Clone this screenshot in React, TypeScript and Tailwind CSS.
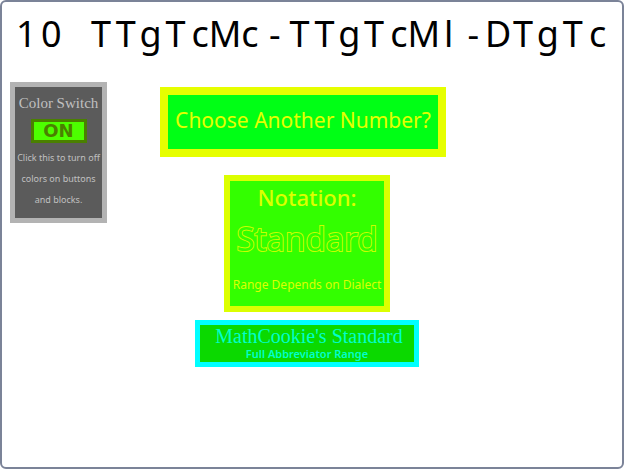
import { useState } from "react";

const amount = "10 TTgTcMc-TTgTcMl-DTgTc";

function AbbreviatedNumber({ value }: { value: string }) {
  return (
    <h1 className="grid auto-cols-fr grid-flow-col px-3 text-4xl leading-10 text-black">
      {value.split("").map((character, index) => (
        <span key={index} className="flex min-w-0 justify-center whitespace-pre">
          {character}
        </span>
      ))}
    </h1>
  );
}

function ColorSwitch() {
  const [on, setOn] = useState(true);
  return (
    <button
      type="button"
      aria-pressed={on}
      onClick={() => setOn(!on)}
      className="flex w-[97px] flex-col items-center justify-self-start border-5 border-[#b3b3b3] bg-[#5b5b5b] pt-1 pb-2 text-[#c0c0c0]"
    >
      <span className="font-['Liberation_Serif',serif] text-[15px] leading-6 whitespace-nowrap">
        Color Switch
      </span>
      <span className="mt-1 flex h-6 w-14 items-center justify-center border-3 border-[#4a8000] bg-[#4dff00] font-['DejaVu_Sans',sans-serif] text-lg leading-5 font-bold text-[#4a8000]">
        {on ? "ON" : "OFF"}
      </span>
      <span className="flex flex-col pt-1 text-[9px] leading-[21px] whitespace-nowrap">
        <span>Click this to turn off</span>
        <span>colors on buttons</span>
        <span>and blocks.</span>
      </span>
    </button>
  );
}

export default function App() {
  return (
    <main className="min-h-screen rounded-md border-2 border-[#7b8398] bg-white pt-3 font-['Noto_Sans',sans-serif]">
      <AbbreviatedNumber value={amount} />
      <div className="mt-7 grid grid-cols-[1fr_auto_1fr] items-start pr-[18px] pl-2">
        <ColorSwitch />
        <div className="mt-[5px] flex flex-col items-center">
          <button
            type="button"
            className="mr-2 h-[70px] border-8 border-[#e6ff00] bg-[#00ff15] px-[7px] pb-1 text-[21px] leading-8 whitespace-nowrap text-[#e6ff00]"
          >
            Choose Another Number?
          </button>
          <button
            type="button"
            className="mt-[18px] flex h-[137px] w-[166px] flex-col items-center border-6 border-[#dcff00] bg-[#33ff00] whitespace-nowrap text-[#dcff00]"
          >
            <span className="text-[22px] leading-8 font-medium">Notation:</span>
            <span className="text-[33px] leading-[52px] text-[#33ff00] [-webkit-text-stroke:2px_#c8ff00] [paint-order:stroke_fill]">
              Standard
            </span>
            <span className="pt-1 text-[12px] leading-8">Range Depends on Dialect</span>
          </button>
          <button
            type="button"
            className="mt-2 flex h-[47px] w-56 flex-col items-center border-5 border-[#00ffff] bg-[#0bd900] whitespace-nowrap text-[#00ffcc]"
          >
            <span className="pl-1 font-['Liberation_Serif',serif] text-xl leading-[22px]">
              MathCookie's Standard
            </span>
            <span className="text-[11px] leading-[14px] font-semibold">
              Full Abbreviator Range
            </span>
          </button>
        </div>
      </div>
    </main>
  );
}
